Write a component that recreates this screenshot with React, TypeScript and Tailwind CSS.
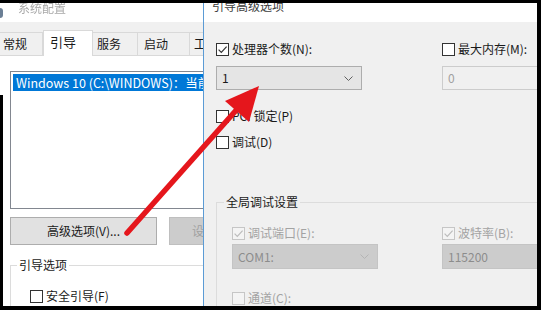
import React from "react";

const FONT = "font-['Noto_Sans_CJK_SC','Liberation_Sans',sans-serif]";

function Box({ checked, disabled }: { checked?: boolean; disabled?: boolean }) {
  return (
    <span
      className={`w-[13px] h-[13px] border shrink-0 flex items-center justify-center ${
        disabled ? "border-[#c6c6c6] bg-[#f4f4f4]" : "border-[#333333] bg-white"
      }`}
    >
      {checked && (
        <svg width="11" height="11" viewBox="0 0 11 11">
          <path
            d="M1.6 5.6 L4.3 8.3 L9.6 2.6"
            fill="none"
            stroke={disabled ? "#bcbcbc" : "#333333"}
            strokeWidth="1.2"
          />
        </svg>
      )}
    </span>
  );
}

function Check({
  label,
  checked,
  disabled,
}: {
  label: string;
  checked?: boolean;
  disabled?: boolean;
}) {
  return (
    <div className="flex items-center h-[14px] gap-[3px]">
      <Box checked={checked} disabled={disabled} />
      <span
        className={`text-[12px] leading-[14px] whitespace-nowrap ${
          disabled ? "text-[#a3a3a3]" : "text-[#1a1a1a]"
        }`}
      >
        {label}
      </span>
    </div>
  );
}

function Chevron({ color }: { color: string }) {
  return (
    <svg width="9" height="5" viewBox="0 0 9 5">
      <path d="M0.5 0.5 L4.5 4.5 L8.5 0.5" fill="none" stroke={color} strokeWidth="1" />
    </svg>
  );
}

export default function App() {
  return (
    <div
      className={`${FONT} relative w-[541px] h-[310px] overflow-hidden bg-black pt-[3px] pr-[4px] pb-[4px] flex`}
    >
      {/* Left window: 系统配置 */}
      <div className="w-[203px] shrink-0 h-full flex flex-col overflow-hidden bg-[#f0f0f0]">
        <div className="h-[19px] bg-white flex items-start shrink-0">
          <span className="w-[3px] h-[10px] mt-[5px] bg-[#6b7f95] rounded-r-sm" />
          <span className="ml-[15px] -mt-[2px] text-[12px] leading-[14px] text-[#a8a8a8] blur-[0.3px]">
            系统配置
          </span>
        </div>
        {/* tabs */}
        <div className="mt-[9px] h-[25px] flex items-end shrink-0 text-[12px] text-[#1a1a1a] border-b border-[#d9d9d9]">
          <div className="w-[43px] shrink-0 h-[23px] border-r border-t border-[#d9d9d9] pl-[3px] leading-[21px]">常规</div>
          <div className="w-[50px] shrink-0 h-[26px] -mb-px bg-white border-x border-t border-[#d9d9d9] pl-[6px] leading-[22px] text-[13px]">
            引导
          </div>
          <div className="w-[45px] shrink-0 h-[23px] border-r border-t border-[#d9d9d9] pl-[4px] leading-[21px]">服务</div>
          <div className="w-[52px] shrink-0 h-[23px] border-r border-t border-[#d9d9d9] pl-[6px] leading-[21px]">启动</div>
          <div className="w-[30px] shrink-0 h-[23px] border-t border-[#d9d9d9] pl-[4px] leading-[21px]">工</div>
        </div>
        {/* panel */}
        <div className="flex-1 bg-white flex flex-col pl-[10px]">
          <div className="mt-[15px] w-[220px] h-[138px] border border-[#828790] p-[2px] shrink-0">
            <div className="h-[17px] bg-[#0078d7] text-white text-[12.5px] leading-[17px] pl-[3px] whitespace-nowrap">
              Windows 10 (C:\WINDOWS)：当前 OS；默认 OS
            </div>
          </div>
          <div className="mt-[8px] flex gap-[12px] shrink-0">
            <div className="w-[147px] shrink-0 h-[28px] bg-[#e1e1e1] border border-[#adadad] flex items-center justify-center text-[12px] text-[#1a1a1a]">
              高级选项(V)...
            </div>
            <div className="w-[120px] shrink-0 h-[28px] bg-[#cccccc] border border-[#bfbfbf] flex items-center pl-[22px] text-[12px] text-[#a0a0a0] whitespace-nowrap">
              设为默认值(D)
            </div>
          </div>
          <div className="mt-[20px] w-[230px] flex-1 border-l border-t border-[#dcdcdc] relative">
            <span className="absolute -top-[8px] left-[6px] px-[2px] bg-white text-[12px] leading-[14px] text-[#1a1a1a]">
              引导选项
            </span>
            <div className="mt-[23px] ml-[19px]">
              <Check label="安全引导(F)" />
            </div>
          </div>
        </div>
      </div>

      {/* Right dialog: 引导高级选项 */}
      <div className="flex-1 min-w-0 h-full flex flex-col border-l border-[#5b9bd5] overflow-hidden bg-[#f0f0f0]">
        <div className="h-[19px] bg-white shrink-0 flex items-start">
          <span className="ml-[8px] -mt-[4px] text-[12px] leading-[14px] text-[#3c3c3c]">引导高级选项</span>
        </div>
        <div className="flex-1 flex flex-col pl-[12px]">
          <div className="mt-[20px] flex">
            <div className="w-[226px] shrink-0 flex flex-col">
              <Check label="处理器个数(N):" checked />
              <div className="mt-[10px] w-[146px] h-[24px] bg-[#e5e5e5] border border-[#adadad] flex items-center justify-between pl-[5px] pr-[8px]">
                <span className="text-[12px] text-[#1a1a1a]">1</span>
                <Chevron color="#606060" />
              </div>
            </div>
            <div className="w-[120px] shrink-0 flex flex-col">
              <Check label="最大内存(M):" />
              <div className="mt-[10px] w-[120px] h-[24px] bg-[#f0f0f0] border border-[#cccccc] flex items-center pl-[5px]">
                <span className="text-[12px] text-[#a0a0a0]">0</span>
              </div>
            </div>
          </div>
          <div className="mt-[19px]">
            <Check label="PCI 锁定(P)" />
          </div>
          <div className="mt-[12px]">
            <Check label="调试(D)" />
          </div>
          <div className="mt-[53px] flex-1 border-l border-t border-[#dcdcdc] relative">
            <span className="absolute -top-[8px] left-[7px] px-[2px] bg-[#f0f0f0] text-[12px] leading-[14px] text-[#1a1a1a]">
              全局调试设置
            </span>
            <div className="mt-[23px] ml-[15px] flex">
              <div className="w-[210px] shrink-0 flex flex-col">
                <Check label="调试端口(E):" checked disabled />
                <div className="mt-[4px] w-[146px] h-[25px] bg-[#cccccc] border border-[#c4c4c4] flex items-center justify-between pl-[5px] pr-[8px]">
                  <span className="text-[12px] text-[#8c8c8c]">COM1:</span>
                  <Chevron color="#b4b4b4" />
                </div>
              </div>
              <div className="w-[120px] shrink-0 flex flex-col">
                <Check label="波特率(B):" checked disabled />
                <div className="mt-[4px] w-[120px] h-[25px] bg-[#cccccc] border border-[#c4c4c4] flex items-center pl-[5px]">
                  <span className="text-[12px] text-[#8c8c8c]">115200</span>
                </div>
              </div>
            </div>
            <div className="mt-[22px] ml-[15px]">
              <Check label="通道(C):" disabled />
            </div>
          </div>
        </div>
      </div>

      {/* left black edge of the photo */}
      <div className="absolute left-0 top-[95px] bottom-0 w-[3px] bg-black" />

      {/* red arrow */}
      <svg className="absolute inset-0 pointer-events-none" width="541" height="310" viewBox="0 0 541 310">
        <line x1="127" y1="233" x2="239" y2="107" stroke="#e5161c" strokeWidth="5.5" strokeLinecap="round" />
        <polygon points="259,86 225,101 249,122" fill="#e5161c" />
      </svg>
    </div>
  );
}
